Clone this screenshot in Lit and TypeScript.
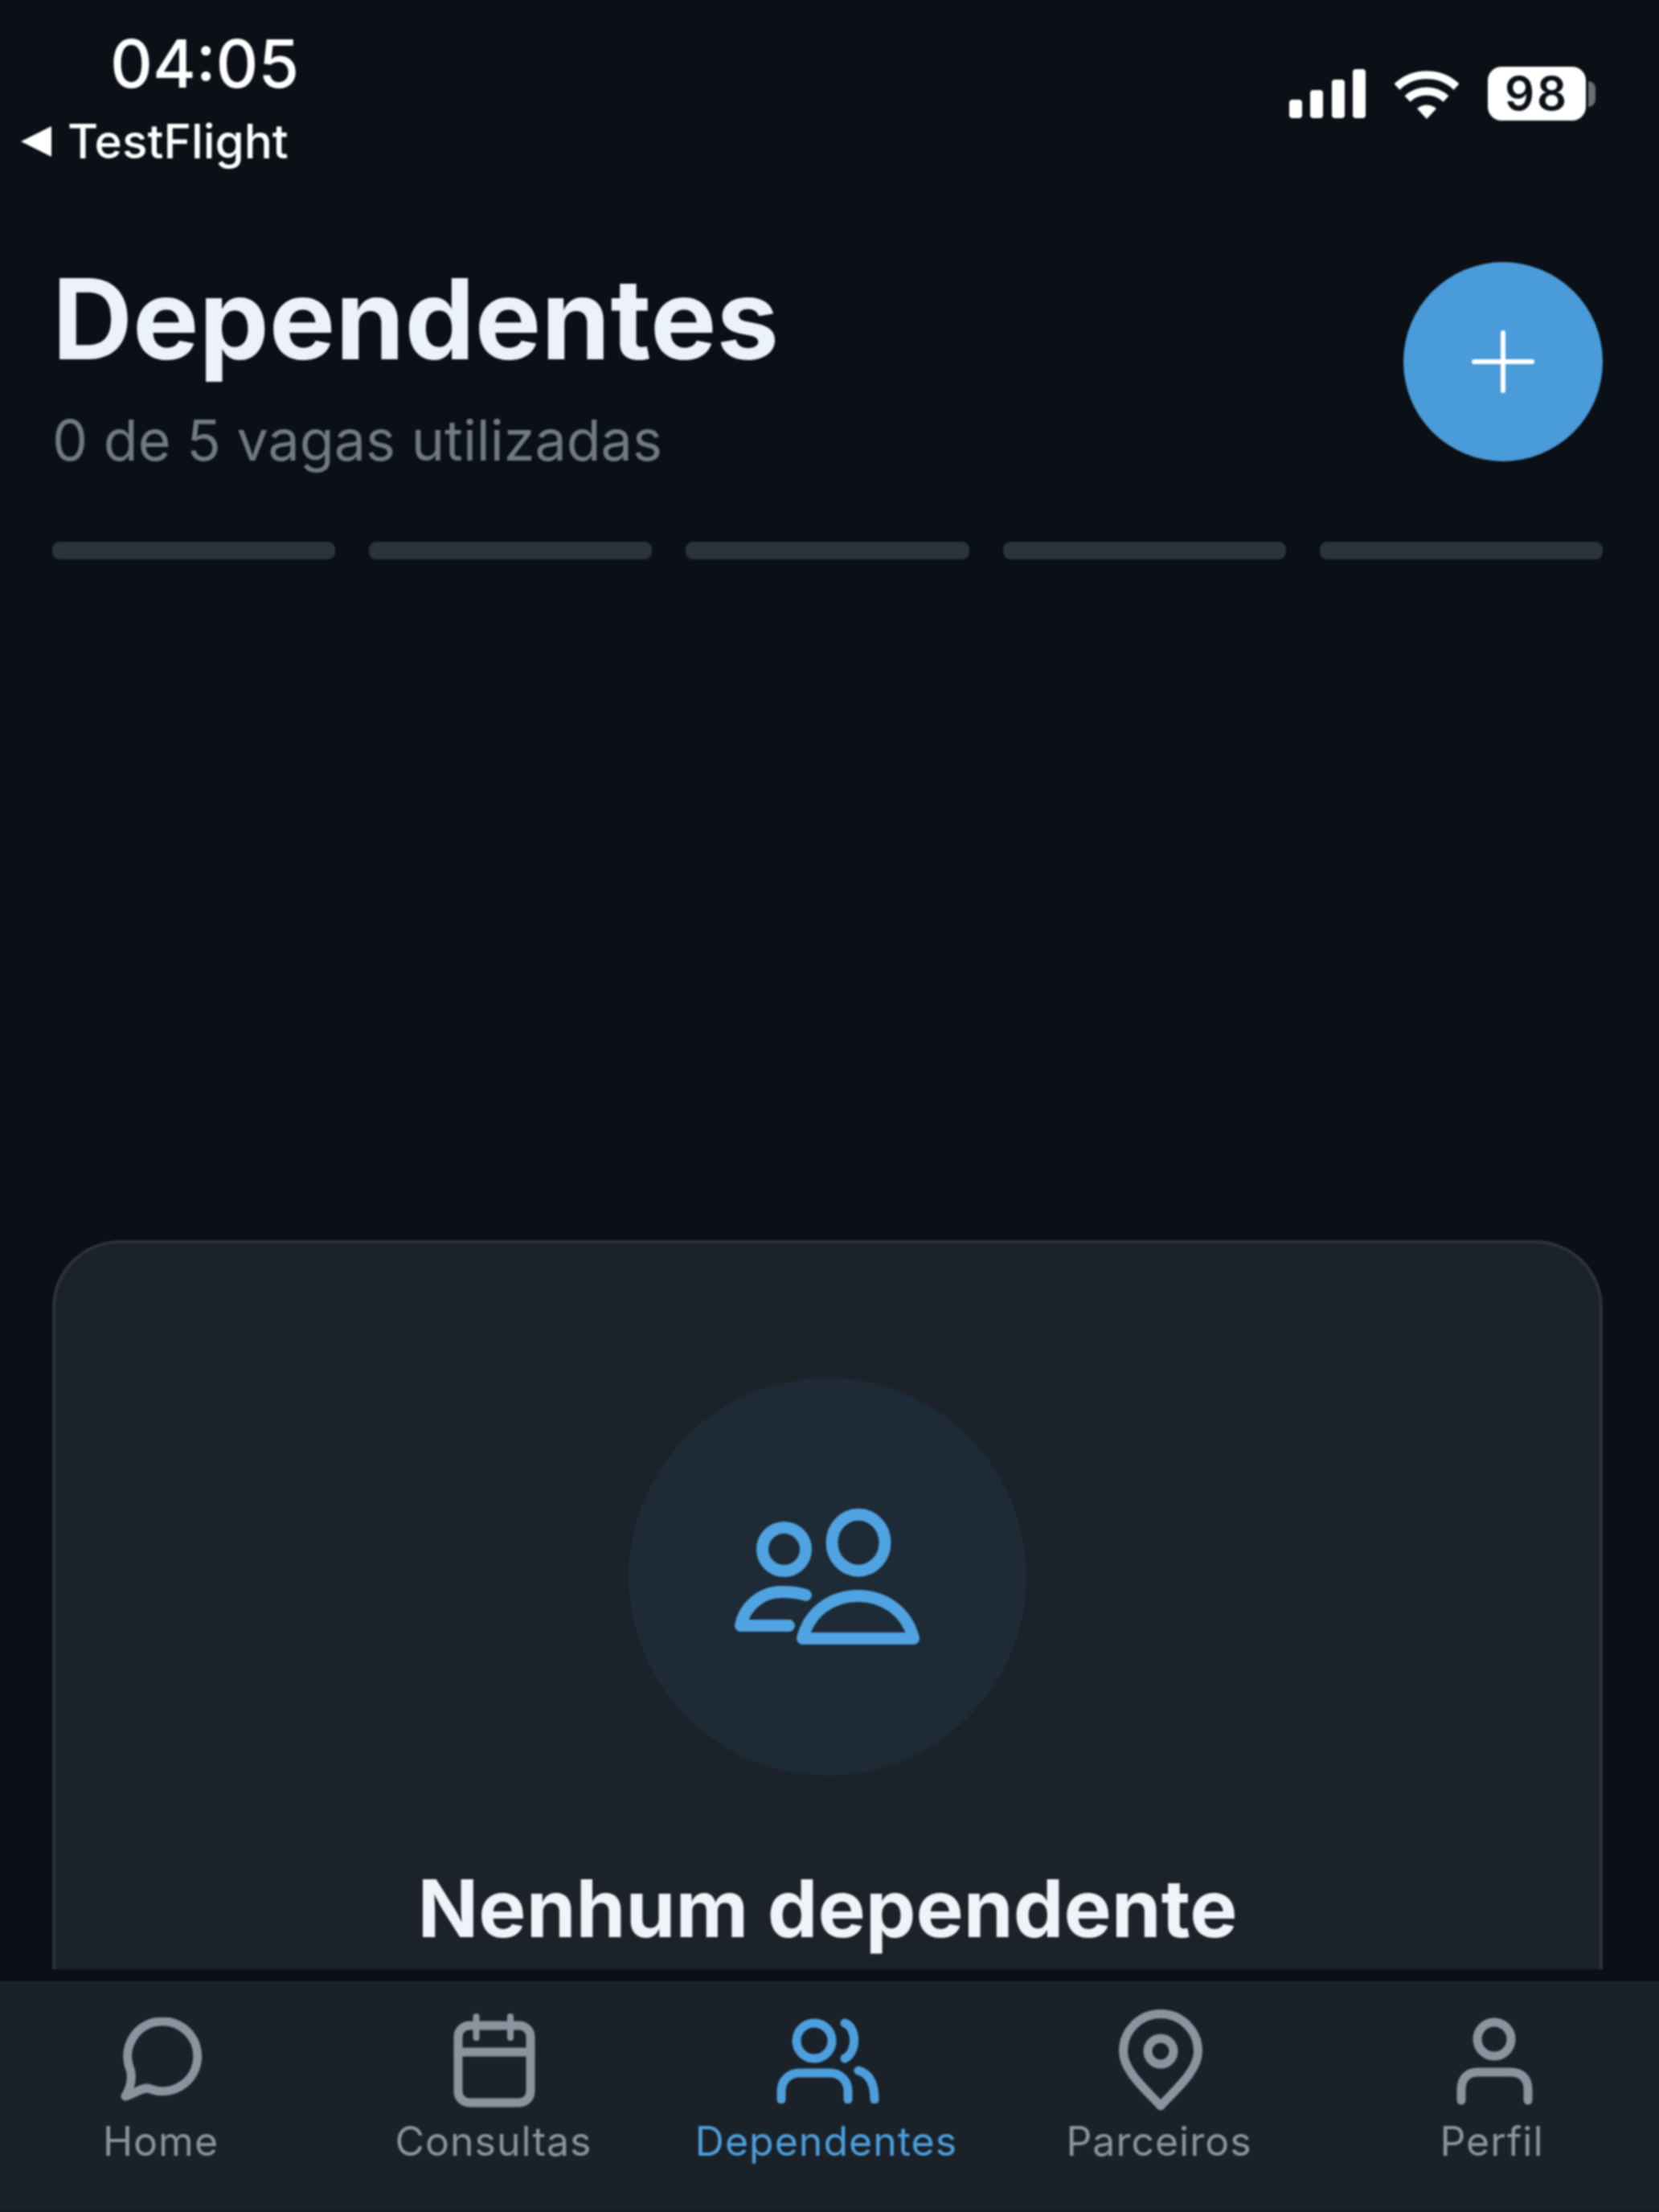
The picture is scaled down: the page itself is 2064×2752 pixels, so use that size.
import { LitElement, html, css, svg } from "lit";
import { customElement } from "lit/decorators.js";

const tabs = [
  { label: "Home", w: 110, h: 112, dx: 5, top: 42, icon: svg`<path d="M6 98C12 88 15 78 12.5 66A43.5 43.5 0 1 1 37 89C28 85 18 95 6 98Z"/>` },
  { label: "Consultas", w: 110, h: 120, dx: 5, top: 37, icon: svg`<rect x="6" y="15" width="90" height="96" rx="14"/><path d="M6 48H96"/><path d="M28.5 4V30M71 4V30" stroke-width="8"/>` },
  { label: "Dependentes", active: true, w: 140, h: 112, dx: 2, top: 37, icon: svg`<circle cx="53" cy="34" r="22"/><path d="M91 12C106 17 107 48 91 56"/><path d="M12 107V97C12 83 22 74 35 74H72C86 74 95 84 95 97V107"/><path d="M108 71C122 75 128 88 128 107"/>` },
  { label: "Parceiros", w: 110, h: 135, dx: 2, top: 29, icon: svg`<path d="M55 123C38 104 8.5 80 8.5 55A46.5 46.5 0 0 1 101.5 55C101.5 80 72 104 55 123Z"/><circle cx="55" cy="55" r="16"/>` },
  { label: "Perfil", w: 105, h: 115, dx: 3, top: 37, icon: svg`<circle cx="52" cy="32" r="21"/><path d="M11 108V95C11 80 19 73 32 73H72C86 73 94 81 94 95V108"/>` },
];

@customElement("app-root")
export class AppRoot extends LitElement {
  static styles = css`
    :host { display: block; width: 2064px; height: 2752px; background: #0b1016; font-family: Inter, "Noto Sans", sans-serif; overflow: hidden; }
    .screen { height: 2752px; display: flex; flex-direction: column; filter: blur(0.8px); }
    .status { height: 326px; flex: none; display: flex; justify-content: space-between; align-items: flex-start; padding: 0 79px 0 26px; box-sizing: border-box; }
    .status-left { display: flex; flex-direction: column; color: #fff; }
    .time { font-size: 82px; font-weight: 550; line-height: 100px; margin: 30px 0 0 111px; }
    .back { display: flex; align-items: center; gap: 20px; font-size: 58.5px; font-weight: 450; line-height: 70px; margin-top: 11px; }
    .status-right { display: flex; align-items: center; margin-top: 83px; height: 67px; }
    .signal { margin-right: 35px; }
    .wifi { margin-right: 35px; }
    .battery { width: 122px; height: 67px; border-radius: 17px; background: #fff; color: #0b1016; font-size: 58px; font-weight: 600; letter-spacing: 3px; line-height: 67px; text-align: center; }
    .nub { width: 9px; height: 32px; margin-left: 3px; background: #6b6f74; border-radius: 0 10px 10px 0; }
    .head { flex: none; height: 248px; display: flex; justify-content: space-between; padding: 0 70px 0 65px; }
    h1 { margin: 0; font-size: 138.5px; font-weight: 700; line-height: 141px; color: #ecf3f8; }
    .sub { margin-top: 37px; font-size: 70px; line-height: 88px; color: #6f7a85; }
    .fab { width: 248px; height: 248px; border-radius: 50%; background: #4a9bd9; display: flex; align-items: center; justify-content: center; }
    .bars { flex: none; display: flex; gap: 42px; margin: 100px 70px 0 65px; }
    .bars i { flex: 1; height: 22px; border-radius: 9px; background: #2a343f; }
    .clip { flex: 1; min-height: 0; overflow: hidden; margin: 847px 70px 0 65px; }
    .card { box-sizing: border-box; height: 1400px; background: #1b2229; border: 4px solid #2c333b; border-radius: 84px; display: flex; flex-direction: column; align-items: center; padding-top: 167px; }
    .circle { width: 495px; height: 495px; border-radius: 50%; background: #1e2a35; display: flex; align-items: center; justify-content: center; }
    h2 { margin: 105px 0 0; font-size: 99.5px; line-height: 120px; font-weight: 700; color: #f0f4f8; }
    nav { flex: none; margin-top: 15px; height: 287px; box-sizing: border-box; background: #1a2129; border-top: 3px solid #1f2730; display: grid; grid-template-columns: repeat(5, 414px); margin-left: -7px; width: 2078px; }
    .tab { display: flex; flex-direction: column; align-items: center; color: #8a949e; font-size: 50px; letter-spacing: 1px; }
    .tab.active { color: #4c9fdc; }
    .ic { height: 145px; display: flex; align-items: flex-start; justify-content: center; }
    .ic svg { flex: none; fill: none; stroke: currentColor; stroke-width: 11; stroke-linecap: round; stroke-linejoin: round; }
    .lb { line-height: 60px; margin-top: 21px; }
  `;

  render() {
    return html`<div class="screen">
      <div class="status">
        <div class="status-left">
          <div class="time">04:05</div>
          <div class="back">
            <svg width="38" height="38" viewBox="0 0 38 38"><path d="M0 19L38 0V38Z" fill="#fff"/></svg>
            <span>TestFlight</span>
          </div>
        </div>
        <div class="status-right">
          <svg class="signal" width="95" height="61" viewBox="0 0 95 61" fill="#fff">
            <rect x="0" y="38" width="16" height="23" rx="4"/><rect x="26" y="26" width="16" height="35" rx="4"/><rect x="53" y="13" width="16" height="48" rx="4"/><rect x="79" y="0" width="16" height="61" rx="4"/>
          </svg>
          <svg class="wifi" width="82" height="62" viewBox="0 0 82 62" fill="none" stroke="#fff" stroke-width="10">
            <path d="M4 22A54 54 0 0 1 78 22"/><path d="M17 37A35 35 0 0 1 65 37"/><path d="M29 49A18 18 0 0 1 53 49L41 62Z" fill="#fff" stroke="none"/>
          </svg>
          <div class="battery">98</div>
          <div class="nub"></div>
        </div>
      </div>
      <div class="head">
        <div>
          <h1>Dependentes</h1>
          <div class="sub">0 de 5 vagas utilizadas</div>
        </div>
        <div class="fab">
          <svg width="78" height="78" viewBox="0 0 78 78" stroke="#fff" stroke-width="6" stroke-linecap="round"><path d="M39 3V75M3 39H75"/></svg>
        </div>
      </div>
      <div class="bars"><i></i><i></i><i></i><i></i><i></i></div>
      <div class="clip">
        <div class="card">
          <div class="circle">
            <svg width="244" height="186" viewBox="907.5 1868.5 244 186" fill="none" stroke="#4fa3e0" stroke-width="15" stroke-linecap="round" stroke-linejoin="round">
              <ellipse cx="1067.5" cy="1918.7" rx="33" ry="35"/>
              <circle cx="975" cy="1927" r="27"/>
              <path d="M1002 1984C990 1980 980 1980 972 1980C945 1980 925 2000 921 2022H981"/>
              <path d="M998 2038C1006 2005 1034 1985 1067 1985C1100 1985 1128 2005 1136 2038Z"/>
            </svg>
          </div>
          <h2>Nenhum dependente</h2>
        </div>
      </div>
      <nav>
        ${tabs.map(
          (t) => html`<div class="tab ${t.active ? "active" : ""}">
            <div class="ic"><svg width=${t.w} height=${t.h} viewBox="0 0 ${t.w} ${t.h}" style="margin:${t.top}px 0 0 ${2 * t.dx}px">${t.icon}</svg></div>
            <div class="lb">${t.label}</div>
          </div>`
        )}
      </nav>
    </div>`;
  }
}
